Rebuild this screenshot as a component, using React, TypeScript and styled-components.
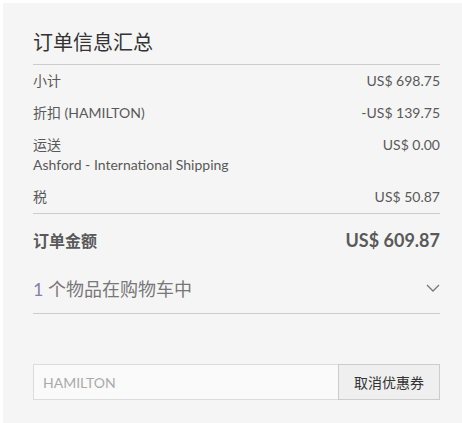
import React from "react";
import styled, { createGlobalStyle } from "styled-components";

const Global = createGlobalStyle`
  html, body { margin: 0; padding: 0; background: #fff; overflow: hidden; }
  body { font-family: Lato, "Noto Sans CJK SC", sans-serif; }
  * { box-sizing: border-box; }
`;

const Page = styled.div`
  padding: 3px 0 0 3px;
`;

const Panel = styled.section`
  background: #f5f5f5;
  padding: 26px 22px 24px 30px;
  height: 420px;
  color: #555;
`;

const Title = styled.h2`
  margin: 0;
  font-size: 20px;
  font-weight: 400;
  line-height: 26px;
  color: #333;
  padding-bottom: 9px;
  border-bottom: 1px solid #ccc;
`;

const Rows = styled.div`
  display: flex;
  flex-direction: column;
  gap: 12px;
  padding: 6px 0 6px;
  border-bottom: 1px solid #ccc;
`;

const Row = styled.div`
  display: flex;
  justify-content: space-between;
  align-items: flex-start;
  font-size: 14px;
  line-height: 20px;
  color: #595959;
`;

const Label = styled.div`
  display: flex;
  flex-direction: column;
`;

const Value = styled.div`
  text-align: right;
`;

const Total = styled.div`
  display: flex;
  justify-content: space-between;
  align-items: center;
  height: 52px;
  color: #595959;
  font-weight: 700;
`;

const TotalLabel = styled.span`
  font-size: 16px;
`;

const TotalValue = styled.span`
  font-size: 18px;
`;

const Cart = styled.button`
  all: unset;
  box-sizing: border-box;
  display: flex;
  justify-content: space-between;
  align-items: center;
  width: 100%;
  height: 48px;
  border-bottom: 1px solid #ccc;
  font-family: Lato, "Noto Sans CJK SC", sans-serif;
  font-size: 18px;
  color: #777;
  padding-bottom: 4px;
`;

const CartCount = styled.span`
  color: #8a7fa6;
`;

const Coupon = styled.form`
  display: flex;
  margin-top: 50px;
  height: 36px;
`;

const CouponInput = styled.input`
  flex: 1;
  min-width: 0;
  height: 100%;
  border: 1px solid #dcdcdc;
  border-right: none;
  background: #fafafa;
  padding: 0 9px;
  font-family: Lato, "Noto Sans CJK SC", sans-serif;
  font-size: 14px;
  color: #555;
  outline: none;
  &::placeholder { color: #aaa; }
`;

const CouponButton = styled.button`
  width: 102px;
  height: 100%;
  border: 1px solid #ccc;
  background: #efefef;
  font-family: Lato, "Noto Sans CJK SC", sans-serif;
  font-size: 14px;
  color: #333;
  padding: 0;
  cursor: pointer;
`;

const Chevron = () => (
  <svg width="14" height="8" viewBox="0 0 14 8" fill="none">
    <path d="M1 1l6 6 6-6" stroke="#777" strokeWidth="1.3" />
  </svg>
);

export default function App() {
  return (
    <Page>
      <Global />
      <Panel>
        <Title>订单信息汇总</Title>
        <Rows>
          <Row>
            <Label>小计</Label>
            <Value>US$ 698.75</Value>
          </Row>
          <Row>
            <Label>折扣 (HAMILTON)</Label>
            <Value>-US$ 139.75</Value>
          </Row>
          <Row>
            <Label>
              <span>运送</span>
              <span>Ashford - International Shipping</span>
            </Label>
            <Value>US$ 0.00</Value>
          </Row>
          <Row>
            <Label>税</Label>
            <Value>US$ 50.87</Value>
          </Row>
        </Rows>
        <Total>
          <TotalLabel>订单金额</TotalLabel>
          <TotalValue>US$ 609.87</TotalValue>
        </Total>
        <Cart type="button">
          <span>
            <CartCount>1</CartCount> 个物品在购物车中
          </span>
          <Chevron />
        </Cart>
        <Coupon onSubmit={(e) => e.preventDefault()}>
          <CouponInput placeholder="HAMILTON" />
          <CouponButton type="button">取消优惠券</CouponButton>
        </Coupon>
      </Panel>
    </Page>
  );
}
